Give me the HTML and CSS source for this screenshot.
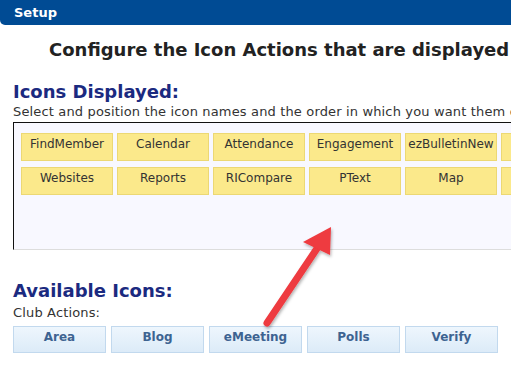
FILE: index.html
```html
<!DOCTYPE html>
<html lang="en">
<head>
  <meta charset="UTF-8">
  <meta name="viewport" content="width=device-width, initial-scale=1">
  <title>Setup - Icon Actions</title>
  <link rel="stylesheet" href="styles.css">
</head>
<body>

<div class="topbar"><span class="topbar-title">Setup</span></div>

<div class="content">
  <h1 class="page-title">Configure the Icon Actions that are displayed</h1>

  <!-- Icons currently shown -->
  <h2 class="section-title">Icons Displayed:</h2>
  <p class="hint">Select and position the icon names and the order in which you want them displayed.</p>
  <div class="displayed">
    <ul class="icon-grid">
      <li class="icon-item">FindMember</li>
      <li class="icon-item">Calendar</li>
      <li class="icon-item">Attendance</li>
      <li class="icon-item">Engagement</li>
      <li class="icon-item">ezBulletinNew</li>
      <li class="icon-item">eMail</li>
      <li class="icon-item">Websites</li>
      <li class="icon-item">Reports</li>
      <li class="icon-item">RICompare</li>
      <li class="icon-item">PText</li>
      <li class="icon-item">Map</li>
      <li class="icon-item">Events</li>
    </ul>
  </div>

  <!-- Icons that can be added -->
  <h2 class="section-title available-title">Available Icons:</h2>
  <p class="hint club-label">Club Actions:</p>
  <div class="available">
    <button class="action">Area</button>
    <button class="action">Blog</button>
    <button class="action">eMeeting</button>
    <button class="action">Polls</button>
    <button class="action">Verify</button>
  </div>
</div>

<!-- Callout arrow -->
<svg class="callout" width="120" height="140" viewBox="0 0 120 140">
  <defs>
    <filter id="shadow" x="-20%" y="-20%" width="140%" height="140%">
      <feDropShadow dx="1" dy="2" stdDeviation="1.5" flood-color="#000" flood-opacity="0.3"/>
    </filter>
  </defs>
  <g filter="url(#shadow)">
    <line x1="27" y1="118" x2="78" y2="42" stroke="#ee3a3f" stroke-width="7" stroke-linecap="round"/>
    <polygon points="91,22 90,50 63,37" fill="#ee3a3f"/>
  </g>
</svg>

</body>
</html>
```

FILE: styles.css
```css
* { box-sizing: border-box; }
body {
  margin: 0;
  font-family: "DejaVu Sans", Verdana, sans-serif;
  background: #fff;
  color: #333;
  overflow: hidden;
  position: relative;
}

.topbar {
  height: 25px;
  background: #004b94;
  border-bottom-left-radius: 5px;
  padding-left: 14px;
  display: flex;
  align-items: center;
}

.topbar-title {
  color: #fff;
  font-weight: bold;
  font-size: 13px;
}

.content {
  width: 600px;
  padding-left: 13px;
}

.page-title {
  margin: 13px 0 0;
  padding-left: 36px;
  font-size: 18px;
  line-height: 24px;
  color: #222;
  white-space: nowrap;
}

.section-title {
  margin: 19px 0 0;
  font-size: 18px;
  line-height: 22px;
  color: #1b2a80;
}

.hint {
  margin: 1px 0 0;
  font-size: 13px;
  line-height: 16px;
  letter-spacing: 0.15px;
  color: #333;
  white-space: nowrap;
}

.displayed {
  margin-top: 2px;
  height: 128px;
  border: 1px solid #111;
  border-bottom-color: #ddd;
  border-right: none;
  background: #f8f8ff;
}

.icon-grid {
  list-style: none;
  margin: 0;
  padding: 10px 0 0 7px;
  display: grid;
  grid-template-columns: repeat(6, 92px);
  gap: 6px 4px;
}

.icon-item {
  height: 28px;
  background: #fbe98b;
  border: 1px solid #ecd874;
  font-size: 12px;
  line-height: 20px;
  text-align: center;
  color: #333;
}

.available-title { margin-top: 30px; }

.club-label { margin-top: 3px; }

.available {
  margin-top: 5px;
  display: flex;
  gap: 5px;
}

.action {
  width: 93px;
  height: 27px;
  padding: 0 0 5px;
  border: 1px solid #c2d9ee;
  background: linear-gradient(#eef6fd, #dcebf8);
  font-family: "DejaVu Sans", Verdana, sans-serif;
  font-size: 12px;
  font-weight: bold;
  color: #3d6391;
}

.callout {
  position: absolute;
  left: 240px;
  top: 205px;
}
```
